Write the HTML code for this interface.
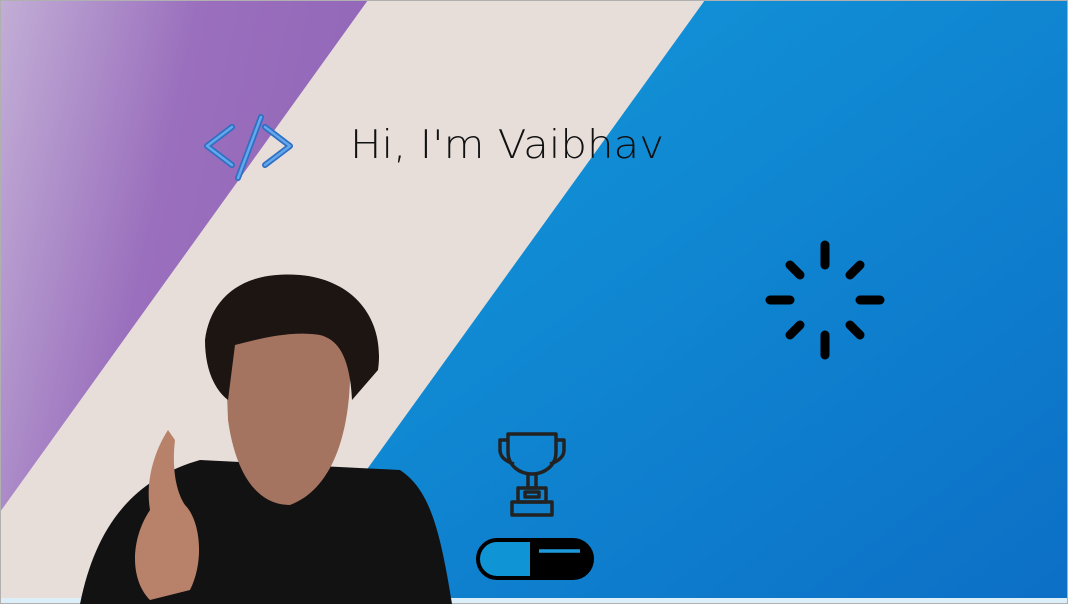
<!DOCTYPE html>
<html><head><style>
html,body{margin:0;padding:0;width:1068px;height:604px;overflow:hidden;background:#e8dfd9}
</style></head><body>
<svg width="1068" height="604" xmlns="http://www.w3.org/2000/svg" style="position:absolute;left:0;top:0">
<defs>
<linearGradient id="pu" x1="0" y1="0" x2="1" y2="0.3"><stop offset="0" stop-color="#c2aed6"/><stop offset="0.5" stop-color="#9a6fbd"/><stop offset="1" stop-color="#9367b8"/></linearGradient>
<linearGradient id="bl" x1="0" y1="0" x2="1" y2="1"><stop offset="0" stop-color="#139bdb"/><stop offset="1" stop-color="#0c6fc6"/></linearGradient>
</defs>
<rect width="1068" height="604" fill="#e7deda"/>
<polygon points="0,0 368,0 0,512" fill="url(#pu)"/>
<polygon points="705,0 1068,0 1068,604 270,604" fill="url(#bl)"/>
<rect x="0" y="598" width="1068" height="6" fill="#dceef8"/>
<rect x="0.5" y="0.5" width="1067" height="603" fill="none" stroke="#b0b0b0"/>
<g fill="none" stroke="#2f6fc4" stroke-width="6" stroke-linecap="round" stroke-linejoin="round">
<polyline points="232,127 207,146 232,165"/><polyline points="265,127 290,146 265,165"/><line x1="261" y1="117" x2="238" y2="178"/>
</g>
<g fill="none" stroke="#62a8ea" stroke-width="2.5" stroke-linecap="round" stroke-linejoin="round">
<polyline points="232,127 207,146 232,165"/><polyline points="265,127 290,146 265,165"/><line x1="261" y1="117" x2="238" y2="178"/>
</g>
<text x="350" y="158" font-family="DejaVu Sans ExtraLight, DejaVu Sans, sans-serif" font-size="39" fill="#111" font-weight="200" textLength="314" lengthAdjust="spacingAndGlyphs">Hi, I'm Vaibhav</text>
<g stroke="#000" stroke-width="9" stroke-linecap="round">
<line x1="825" y1="245" x2="825" y2="265"/><line x1="825" y1="335" x2="825" y2="355"/>
<line x1="770" y1="300" x2="790" y2="300"/><line x1="860" y1="300" x2="880" y2="300"/>
<line x1="850" y1="275" x2="860" y2="265"/><line x1="790" y1="335" x2="800" y2="325"/>
<line x1="850" y1="325" x2="860" y2="335"/><line x1="790" y1="265" x2="800" y2="275"/>
</g>
<g fill="none" stroke="#222" stroke-width="3.5" stroke-linejoin="round">
<path d="M508,434 H556 V452 C556,466 544,474 532,474 C520,474 508,466 508,452 Z"/>
<path d="M508,440 H500 V450 C500,458 508,462 514,464"/><path d="M556,440 H564 V450 C564,458 556,462 550,464"/>
<path d="M528,474 V488 H536 V474"/><rect x="518" y="488" width="28" height="14"/><rect x="525" y="492" width="14" height="5"/><rect x="512" y="502" width="40" height="13"/>
</g>
<path d="M532,540 H497 a19,19 0 0 0 0,38 H532 Z" fill="#0f95d6" stroke="#000" stroke-width="4"/>
<path d="M532,540 H573 a19,19 0 0 1 0,38 H532 Z" fill="#000" stroke="#000" stroke-width="4"/>
<line x1="539" y1="551" x2="580" y2="551" stroke="#1d9ade" stroke-width="3.5"/>
<path d="M80,604 C95,530 130,480 200,460 L400,470 C430,490 440,530 452,604 Z" fill="#121212"/>
<path d="M225,340 C225,300 255,290 290,292 C335,295 352,330 350,380 C348,440 330,490 290,505 C255,505 235,470 228,420 Z" fill="#a47460"/>
<path d="M205,340 C210,300 240,270 300,275 C355,280 385,320 378,370 L352,400 C350,360 340,340 320,335 C290,330 255,340 235,345 L228,400 C215,390 205,370 205,340 Z" fill="#1c1512"/>
<path d="M150,510 C145,480 155,450 168,430 L175,440 C172,465 175,490 185,505 C200,520 205,560 190,590 L150,600 C130,580 130,540 150,510 Z" fill="#b8826a"/>
</svg>
</body></html>
